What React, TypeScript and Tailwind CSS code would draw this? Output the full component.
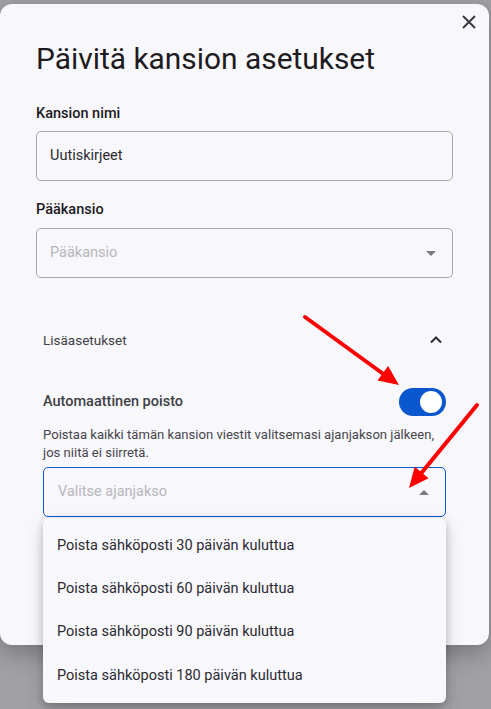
import React from "react";

function Triangle({ up }: { up?: boolean }) {
  return (
    <svg width="10" height="5" viewBox="0 0 10 5" className="shrink-0">
      {up ? (
        <polygon points="0,5 5,0 10,5" fill="#7b7b7f" />
      ) : (
        <polygon points="0,0 10,0 5,5" fill="#7b7b7f" />
      )}
    </svg>
  );
}

const options = [
  "Poista sähköposti 30 päivän kuluttua",
  "Poista sähköposti 60 päivän kuluttua",
  "Poista sähköposti 90 päivän kuluttua",
  "Poista sähköposti 180 päivän kuluttua",
];

export default function App() {
  return (
    <div className="relative w-[491px] h-[709px] overflow-hidden bg-[#a1a1a4] font-['Roboto',sans-serif] pt-[4px]">
      <div className="relative w-[489px] h-[641px] bg-[#f8f7fc] rounded-xl shadow-[0_8px_24px_rgba(0,0,0,0.28)] px-[36px] pt-[37px]">
        <button className="absolute top-[6px] right-[8px] w-6 h-6 flex items-center justify-center">
          <svg width="24" height="24" viewBox="0 0 24 24">
            <path d="M6 6 L18 18 M18 6 L6 18" stroke="#3b3b3f" strokeWidth="2" fill="none" />
          </svg>
        </button>

        <h1 className="text-[29.9px] leading-[36px] text-[#1d1b20] font-normal">
          Päivitä kansion asetukset
        </h1>

        <div className="mt-[27px] text-[14.5px] leading-[20px] font-medium text-[#1d1b20]">
          Kansion nimi
        </div>
        <div className="mt-[7px] h-[50px] border border-[#a8a8ac] rounded-[5px] flex items-center pl-[13px] text-[14.5px] text-[#2b2b2f]">
          Uutiskirjeet
        </div>

        <div className="mt-[19px] text-[14.5px] leading-[20px] font-medium text-[#1d1b20]">
          Pääkansio
        </div>
        <div className="mt-[8px] h-[50px] border border-[#a8a8ac] rounded-[5px] flex items-center justify-between pl-[13px] pr-[16px] text-[14.5px] text-[#b7b6bb]">
          <span>Pääkansio</span>
          <Triangle />
        </div>

        <div className="px-[7px]">
          <div className="mt-[52px] flex items-center justify-between h-[20px]">
            <span className="text-[13.5px] leading-[20px] text-[#3f3e44]">Lisäasetukset</span>
            <svg width="20" height="20" viewBox="0 0 20 20">
              <polyline points="5,12.5 10,7.5 15,12.5" stroke="#2f2f33" strokeWidth="2" fill="none" />
            </svg>
          </div>

          <div className="mt-[38px] flex items-center justify-between h-[28px]">
            <span className="text-[14.5px] leading-[20px] font-medium text-[#403f45]">
              Automaattinen poisto
            </span>
            <div className="w-[47px] h-[28px] rounded-full bg-[#0b57d0] flex items-center justify-end pr-[4px]">
              <div className="w-[22px] h-[22px] rounded-full bg-white" />
            </div>
          </div>

          <div className="mt-[10px] text-[13.1px] leading-[18px] text-[#46454b]">
            <div className="whitespace-nowrap">
              Poistaa kaikki tämän kansion viestit valitsemasi ajanjakson jälkeen,
            </div>
            <div className="whitespace-nowrap">jos niitä ei siirretä.</div>
          </div>

          <div className="relative mt-[5px]">
            <div className="h-[50px] border border-[#0b57d0] rounded-[5px] flex items-center justify-between pl-[14px] pr-[16px] text-[14.5px] text-[#b7b6bb]">
              <span>Valitse ajanjakso</span>
              <Triangle up />
            </div>
            <div className="absolute left-0 right-0 top-full mt-[1px] z-10 bg-[#f8f7fc] rounded-[6px] py-[6px] shadow-[0_3px_8px_rgba(0,0,0,0.22),0_8px_20px_rgba(0,0,0,0.12)]">
              {options.map((o) => (
                <div
                  key={o}
                  className="h-[43.25px] flex items-center pl-[14px] text-[14.5px] text-[#2b2a30]"
                >
                  {o}
                </div>
              ))}
            </div>
          </div>
        </div>
      </div>

      <svg
        className="absolute inset-0 pointer-events-none z-20"
        width="491"
        height="709"
        viewBox="0 0 491 709"
      >
        <line x1="305" y1="317" x2="384" y2="374.5" stroke="#ff0000" strokeWidth="4" strokeLinecap="round" />
        <polygon points="399,385 377.5,380.6 388.1,366" fill="#ff0000" />
        <line x1="477" y1="405" x2="421" y2="473.5" stroke="#ff0000" strokeWidth="4" strokeLinecap="round" />
        <polygon points="409,488 428.6,478.2 414.7,466.8" fill="#ff0000" />
      </svg>
    </div>
  );
}
